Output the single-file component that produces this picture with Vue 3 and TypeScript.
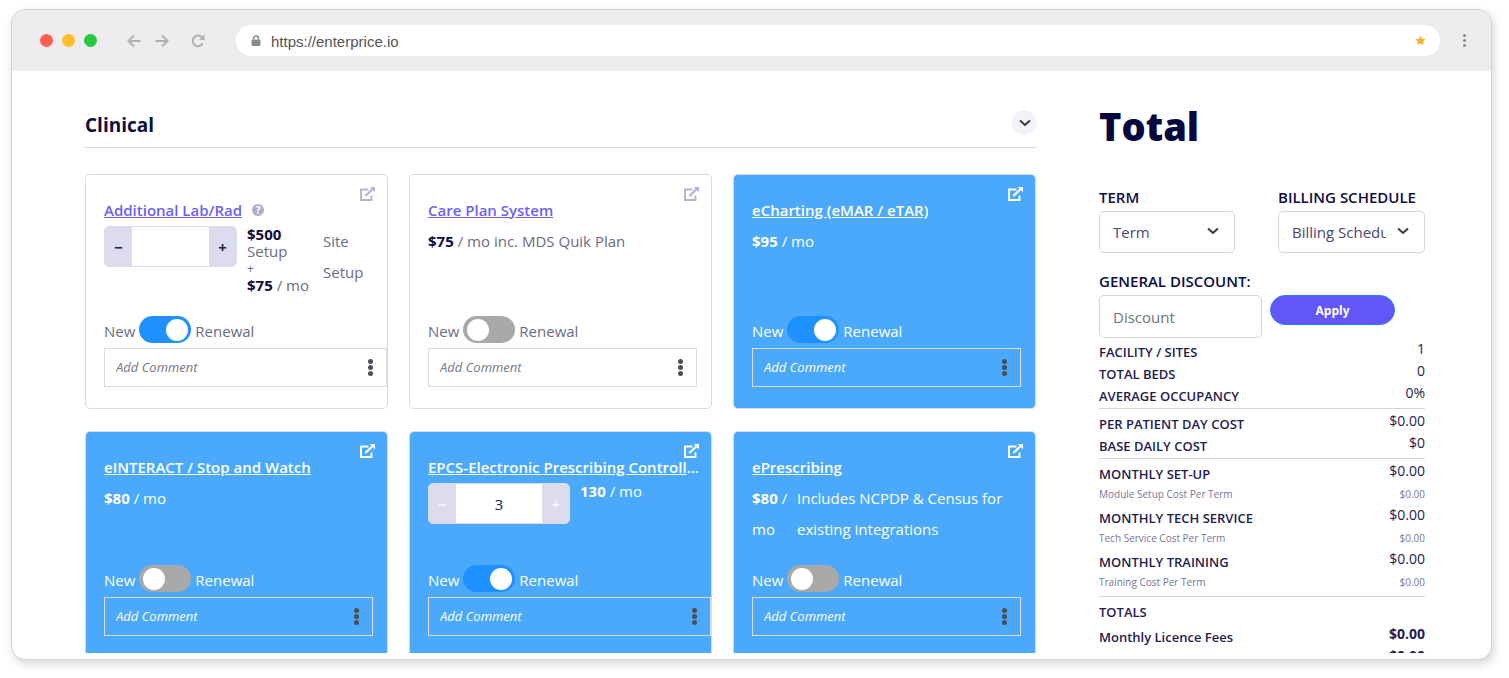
<script setup lang="ts">
import { ref } from 'vue'

interface Module {
  id: string
  title: string
  price: string
  setup?: string
  note?: string
  quantity?: string
  help?: boolean
  selected: boolean
  renewal: boolean
  comment: string
}

interface Line {
  label: string
  value: string
  kind?: 'minor' | 'strong' | 'heading'
}

const modules = ref<Module[]>([
  { id: 'lab', title: 'Additional Lab/Rad', price: '$75', setup: '$500', note: 'Site Setup', quantity: '', help: true, selected: false, renewal: true, comment: '' },
  { id: 'care', title: 'Care Plan System', price: '$75', note: 'inc. MDS Quik Plan', selected: false, renewal: false, comment: '' },
  { id: 'charting', title: 'eCharting (eMAR / eTAR)', price: '$95', selected: true, renewal: true, comment: '' },
  { id: 'interact', title: 'eINTERACT / Stop and Watch', price: '$80', selected: true, renewal: false, comment: '' },
  { id: 'epcs', title: 'EPCS-Electronic Prescribing Controlled Substances', price: '130', quantity: '3', selected: true, renewal: true, comment: '' },
  { id: 'prescribing', title: 'ePrescribing', price: '$80', note: 'Includes NCPDP & Census for existing integrations', selected: true, renewal: false, comment: '' },
])

const groups: Line[][] = [
  [
    { label: 'FACILITY / SITES', value: '1' },
    { label: 'TOTAL BEDS', value: '0' },
    { label: 'AVERAGE OCCUPANCY', value: '0%' },
  ],
  [
    { label: 'PER PATIENT DAY COST', value: '$0.00' },
    { label: 'BASE DAILY COST', value: '$0' },
  ],
  [
    { label: 'MONTHLY SET-UP', value: '$0.00' },
    { label: 'Module Setup Cost Per Term', value: '$0.00', kind: 'minor' },
    { label: 'MONTHLY TECH SERVICE', value: '$0.00' },
    { label: 'Tech Service Cost Per Term', value: '$0.00', kind: 'minor' },
    { label: 'MONTHLY TRAINING', value: '$0.00' },
    { label: 'Training Cost Per Term', value: '$0.00', kind: 'minor' },
  ],
  [
    { label: 'TOTALS', value: '', kind: 'heading' },
    { label: 'Monthly Licence Fees', value: '$0.00', kind: 'strong' },
    { label: '', value: '$0.00', kind: 'strong' },
  ],
]

const address = ref('https://enterprice.io')
const discount = ref('')
const open = ref(true)

function step(m: Module, by: number) {
  m.quantity = String(Math.max(0, Number(m.quantity || 0) + by))
}
</script>

<template>
  <div class="stage">
    <div class="window">
      <header class="toolbar">
        <div class="lights"><i class="red"></i><i class="amber"></i><i class="green"></i></div>
        <nav class="nav" aria-label="Browser">
          <button type="button" aria-label="Back">
            <svg viewBox="0 0 14 14"><path d="M13.5 7H1.5M7 1.5L1.5 7L7 12.5" /></svg>
          </button>
          <button type="button" aria-label="Forward">
            <svg viewBox="0 0 14 14"><path d="M0.5 7H12.5M7 1.5L12.5 7L7 12.5" /></svg>
          </button>
          <button type="button" class="reload" aria-label="Reload">
            <svg viewBox="0 0 14 14"><path d="M11.700 9.300A5.300 5.300 0 1 1 11.200 3.700" /><path class="solid" d="M13.500 .5V6H8Z" /></svg>
          </button>
        </nav>
        <div class="address">
          <svg class="lock" viewBox="0 0 10 12"><path d="M2.500 5.500V3.500a2.500 2.500 0 0 1 5 0V5.500" fill="none" stroke="#8a8a8a" stroke-width="1.500" /><rect x=".5" y="4.800" width="9" height="6.200" rx="1" fill="#8a8a8a" /></svg>
          <input v-model="address" type="text" aria-label="Address" />
          <svg class="star" viewBox="0 0 24 24"><path d="M12 1l3.400 7 7.600 1-5.500 5.300 1.400 7.700L12 18.300 5.100 22l1.400-7.700L1 9l7.600-1z" /></svg>
        </div>
        <button type="button" class="menu" aria-label="Menu"><i></i><i></i><i></i></button>
      </header>

      <div class="page">
        <main class="main">
          <div class="section-head">
            <h2>Clinical</h2>
            <button type="button" class="collapse" aria-label="Toggle Clinical" :aria-expanded="open" @click="open = !open">
              <svg viewBox="0 0 12 8"><path d="M1 1.500L6 6L11 1.500" /></svg>
            </button>
          </div>

          <div v-if="open" class="grid">
            <article
              v-for="m in modules"
              :key="m.id"
              class="card"
              :class="{ selected: m.selected, counted: m.quantity !== undefined }"
            >
              <a class="open-link" href="#" :aria-label="'Open ' + m.title">
                <svg viewBox="0 0 15 14">
                  <path d="M8.500 2.500H1V13H11.500V8.500" fill="none" stroke="currentColor" stroke-width="1.900" />
                  <path d="M5.300 9L12.500 2.200" fill="none" stroke="currentColor" stroke-width="2.200" />
                  <path d="M9.800 0H15V5.200Z" fill="currentColor" />
                </svg>
              </a>
              <div class="title-row">
                <h3><a href="#">{{ m.title }}</a></h3>
                <button v-if="m.help" type="button" class="help" :aria-label="'About ' + m.title">?</button>
              </div>

              <div class="details">
                <div v-if="m.quantity !== undefined" class="stepper" :class="{ narrow: m.setup }">
                  <button type="button" aria-label="Decrease" @click="step(m, -1)">−</button>
                  <input v-model="m.quantity" type="text" :aria-label="m.title + ' quantity'" />
                  <button type="button" aria-label="Increase" @click="step(m, 1)">+</button>
                </div>
                <p v-if="m.setup" class="price stack">
                  <span><b>{{ m.setup }}</b></span>
                  <span>Setup</span>
                  <span class="plus">+</span>
                  <span><b>{{ m.price }}</b> / mo</span>
                </p>
                <p v-else class="price" :class="{ split: m.id === 'prescribing' }"><b>{{ m.price }}</b> / mo</p>
                <p v-if="m.note" class="note">{{ m.note }}</p>
              </div>

              <label class="renewal">
                <span>New</span>
                <input v-model="m.renewal" type="checkbox" role="switch" />
                <span>Renewal</span>
              </label>
              <div class="comment">
                <input v-model="m.comment" type="text" placeholder="Add Comment" :aria-label="'Comment on ' + m.title" />
                <button type="button" :aria-label="'Comment options for ' + m.title"><i></i><i></i><i></i></button>
              </div>
            </article>
          </div>
        </main>

        <aside class="summary">
          <h1>Total</h1>
          <div class="selects">
            <div class="field term">
              <label for="term">TERM</label>
              <div class="select">
                <select id="term"><option>Term</option></select>
                <svg viewBox="0 0 12 8"><path d="M1 1.500L6 6L11 1.500" /></svg>
              </div>
            </div>
            <div class="field billing">
              <label for="billing">BILLING SCHEDULE</label>
              <div class="select">
                <select id="billing"><option>Billing Schedule</option></select>
                <svg viewBox="0 0 12 8"><path d="M1 1.500L6 6L11 1.500" /></svg>
              </div>
            </div>
          </div>
          <div class="field">
            <label for="discount">GENERAL DISCOUNT:</label>
            <div class="discount">
              <input id="discount" v-model="discount" type="text" placeholder="Discount" />
              <button type="button">Apply</button>
            </div>
          </div>
          <div class="lines">
            <dl v-for="(group, g) in groups" :key="g">
              <div v-for="line in group" :key="line.label" :class="line.kind">
                <dt>{{ line.label }}</dt>
                <dd>{{ line.value }}</dd>
              </div>
            </dl>
          </div>
        </aside>
      </div>
    </div>
  </div>
</template>

<style>
body {
  margin: 0;
  background: #fff;
}
</style>

<style scoped>
* {
  box-sizing: border-box;
}
.stage {
  height: 100vh;
  padding: 9px 17px 18px 11px;
  font-family: "Open Sans", "Noto Sans", sans-serif;
  font-size: 15px;
  color: #6b6b85;
  overflow: hidden;
}
h1, h2, h3, p, dl, dd {
  margin: 0;
}
button, input, select {
  font: inherit;
  color: inherit;
  margin: 0;
}
button {
  padding: 0;
  border: 0;
  background: none;
  cursor: pointer;
}
.window {
  height: 100%;
  display: flex;
  flex-direction: column;
  padding-bottom: 6px;
  border: 1px solid #d2d2d2;
  border-radius: 14px;
  background: #fff;
  box-shadow: 2px 4px 10px rgba(0, 0, 0, 0.16);
  overflow: hidden;
}
.toolbar {
  flex: none;
  display: flex;
  align-items: center;
  height: 61px;
  padding: 0 22px 0 28px;
  background: #eeecee;
}
.lights {
  display: flex;
  gap: 9px;
}
.lights i {
  width: 13px;
  height: 13px;
  border-radius: 50%;
}
.red { background: #ff5c54; }
.amber { background: #ffbd2a; }
.green { background: #25ca3e; }
.nav {
  display: flex;
  gap: 14px;
  margin-left: 30px;
}
.nav button {
  display: flex;
}
.nav svg {
  width: 14px;
  height: 14px;
  fill: none;
  stroke: #b1afb1;
  stroke-width: 2;
}
.nav .solid {
  fill: #b1afb1;
  stroke: none;
}
.nav .reload {
  margin-left: 8px;
}
.address {
  flex: 1;
  display: flex;
  align-items: center;
  height: 31px;
  margin: 0 20px 0 31px;
  padding: 0 14px 0 15px;
  border-radius: 16px;
  background: #fff;
}
.address input {
  flex: 1;
  min-width: 0;
  margin-left: 10px;
  padding: 2px 0 0;
  border: 0;
  outline: 0;
  background: none;
  font-family: "Liberation Sans", Arial, sans-serif;
  font-size: 15px;
  color: #555;
}
.lock {
  width: 10px;
  height: 12px;
}
.star {
  width: 11px;
  height: 11px;
  fill: #fbb02d;
}
.menu {
  display: flex;
  flex-direction: column;
  align-items: center;
  gap: 2px;
  width: 9px;
}
.menu i {
  width: 3px;
  height: 3px;
  border-radius: 50%;
  background: #8b898b;
}
.page {
  flex: 1;
  min-height: 0;
  display: flex;
  gap: 62px;
  padding: 0 66px 0 73px;
  overflow: hidden;
}
.main {
  flex: 1;
  min-width: 0;
  padding-top: 36px;
}
.section-head {
  display: flex;
  justify-content: space-between;
  height: 41px;
  border-bottom: 1px solid #dedee2;
}
.section-head h2 {
  font-size: 19px;
  line-height: 36px;
  font-weight: 700;
  color: #0d0d3f;
}
.collapse {
  display: flex;
  align-items: center;
  justify-content: center;
  width: 25px;
  height: 25px;
  margin-top: 3px;
  border-radius: 50%;
  background: #f3f2f8;
}
.collapse svg, .select svg {
  width: 12px;
  height: 8px;
  fill: none;
  stroke: #343a40;
  stroke-width: 2;
}
.grid {
  display: grid;
  grid-template-columns: repeat(3, minmax(0, 1fr));
  gap: 22px 21px;
  padding: 26px 1px 0 0;
}
.card {
  position: relative;
  display: flex;
  flex-direction: column;
  padding: 24px 14px 21px 18px;
  border: 1px solid #d9d9e6;
  border-radius: 5px;
  background: #fff;
}
.card.counted {
  padding-right: 0;
}
.card.selected {
  background: #4ba9fb;
  color: #fff;
}
.open-link {
  position: absolute;
  top: 12px;
  right: 12px;
  display: flex;
  color: #b6b2d2;
}
.open-link svg {
  width: 15px;
  height: 14px;
}
.selected .open-link {
  color: #fff;
}
.title-row {
  display: flex;
  align-items: flex-start;
  gap: 10px;
  height: 24px;
  margin-bottom: 3px;
  padding-right: 8px;
}
.title-row h3 {
  min-width: 0;
  overflow: hidden;
  text-overflow: ellipsis;
  white-space: nowrap;
  font-size: 15px;
  line-height: 22px;
  font-weight: 600;
}
.title-row a {
  color: #6c5ff5;
}
.selected .title-row a {
  color: #fff;
}
.help {
  width: 12px;
  height: 12px;
  margin-top: 5px;
  border-radius: 50%;
  background: #b0acd0;
  color: #fff;
  font-size: 10px;
  line-height: 12px;
  font-weight: 700;
}
.details {
  flex: 1;
  display: flex;
  min-height: 82px;
}
.stepper {
  display: flex;
  width: 142px;
  height: 41px;
  margin-right: 10px;
  border: 1px solid #dcdcee;
  border-radius: 5px;
  background: #dcdcee;
  overflow: hidden;
}
.stepper.narrow {
  width: 133px;
}
.stepper button {
  flex: 0 0 27px;
  font-weight: 700;
  color: #1b1b4b;
}
.selected .stepper button {
  color: #f6f6ff;
}
.stepper input {
  flex: 1;
  min-width: 0;
  padding: 0;
  border: 0;
  outline: 0;
  background: #fff;
  text-align: center;
  color: #1b1b3b;
}
.price, .note {
  line-height: 31px;
}
.price {
  white-space: pre-wrap;
}
.price b {
  font-weight: 700;
  color: #0d0d3f;
}
.selected .price b {
  color: #fff;
}
.counted .price {
  line-height: 17px;
}
.price.stack {
  display: flex;
  flex-direction: column;
  flex: none;
  width: 64px;
  margin-right: 8px;
  padding-bottom: 22px;
  white-space: nowrap;
}
.price .plus {
  font-size: 12px;
}
.price.split {
  flex: 0 0 41px;
}
.note {
  flex: 1;
  margin-left: 4px;
}
.counted .note {
  flex: 0 0 46px;
}
.renewal {
  display: flex;
  gap: 4px;
  line-height: 31px;
  height: 27px;
  margin-bottom: 5px;
}
.renewal input {
  appearance: none;
  position: relative;
  width: 52px;
  height: 27px;
  border-radius: 14px;
  background: #a9a9a9;
}
.renewal input::before {
  content: "";
  position: absolute;
  top: 3px;
  left: 4px;
  width: 22px;
  height: 22px;
  border-radius: 50%;
  background: #fff;
}
.renewal input:checked {
  background: #1e90ff;
}
.renewal input:checked::before {
  left: 27px;
}
.comment {
  display: flex;
  align-items: center;
  height: 39px;
  padding: 0 13px 0 11px;
  border: 1px solid #dcdce2;
}
.comment input {
  flex: 1;
  min-width: 0;
  padding: 0 0 2px;
  border: 0;
  outline: 0;
  background: none;
  font-size: 13px;
}
.comment input::placeholder {
  font-style: italic;
  color: #77777f;
  opacity: 1;
}
.selected .comment input::placeholder {
  color: #fff;
}
.comment button {
  display: flex;
  flex-direction: column;
  gap: 1px;
}
.comment i {
  width: 5px;
  height: 5px;
  border-radius: 50%;
  background: #495057;
}
.summary {
  flex: 0 0 326px;
  color: #1f1c4f;
}
.summary h1 {
  padding-top: 30px;
  font-size: 38px;
  line-height: 50px;
  font-weight: 800;
  color: #07073f;
}
.selects {
  display: flex;
  justify-content: space-between;
  margin-top: 34px;
  margin-bottom: 16px;
}
.field {
  display: flex;
  flex-direction: column;
}
.term {
  width: 136px;
}
.billing {
  width: 147px;
}
.field label {
  line-height: 24px;
  font-weight: 600;
  margin-bottom: 2px;
  color: #0d0d3f;
}
.select {
  position: relative;
}
.select select {
  appearance: none;
  width: 100%;
  height: 42px;
  padding: 0 38px 0 13px;
  border: 1px solid #d6d6e2;
  border-radius: 5px;
  background: #fff;
  color: #4a4770;
}
.select svg {
  position: absolute;
  top: 16px;
  right: 16px;
  pointer-events: none;
}
.discount {
  display: flex;
  gap: 8px;
}
.discount input {
  width: 163px;
  height: 43px;
  padding: 0 13px;
  border: 1px solid #d6d6e2;
  border-radius: 5px;
}
.discount input::placeholder {
  color: #6c757d;
  opacity: 1;
}
.discount button {
  width: 125px;
  height: 30px;
  border: 1px solid #1e80ff;
  border-radius: 15px;
  background: #6356f7;
  color: #fff;
  font-size: 12px;
  font-weight: 700;
}
.lines {
  padding-top: 2px;
}
.lines dl {
  padding-bottom: 2px;
}
.lines dl + dl {
  border-top: 1px solid #d4d4dc;
  padding-top: 3px;
}
.lines dl > div {
  display: flex;
  justify-content: space-between;
  height: 22px;
}
.lines dt {
  font-size: 13px;
  line-height: 24px;
  font-weight: 600;
}
.lines dd {
  font-size: 14px;
  line-height: 18px;
}
.lines .minor {
  height: 16px;
  margin-bottom: 6px;
  color: #77759a;
}
.lines .minor dt, .lines .minor dd {
  font-size: 10px;
  line-height: 20px;
  font-weight: 400;
}
.lines .heading {
  margin-bottom: 3px;
}
.lines .strong dd {
  font-weight: 700;
}
</style>
